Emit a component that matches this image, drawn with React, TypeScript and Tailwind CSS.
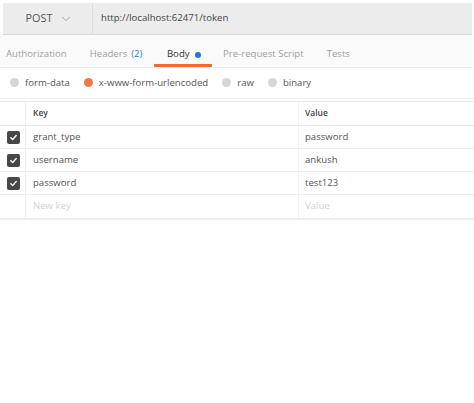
import React from 'react';

// Row data for the urlencoded body
const rows = [
  { key: 'grant_type', value: 'password' },
  { key: 'username', value: 'ankush' },
  { key: 'password', value: 'test123' },
];

const tabs = ['Authorization', 'Headers', 'Body', 'Pre-request Script', 'Tests'];

function Check() {
  return (
    <div className="w-[13px] h-[13px] rounded-[2px] bg-[#474747] flex items-center justify-center">
      <svg width="9" height="9" viewBox="0 0 10 10" fill="none">
        <path d="M2 5.2 L4.1 7.2 L8 2.8" stroke="#fff" strokeWidth="1.6" strokeLinecap="round" strokeLinejoin="round" />
      </svg>
    </div>
  );
}

function Radio({ active, label }: { active?: boolean; label: string }) {
  return (
    <div className="flex items-center gap-[6px]">
      <div className={`w-[9px] h-[9px] rounded-full ${active ? 'bg-[#f07a45]' : 'bg-[#d6d6d6]'}`} />
      <span>{label}</span>
    </div>
  );
}

export default function App() {
  return (
    <div
      className="w-[474px] h-[403px] bg-white text-[9.6px] text-[#555]"
      style={{ fontFamily: '"Open Sans", sans-serif' }}
    >
      {/* Request bar */}
      <div className="pt-[3px] pl-[3px] pr-[2px]">
        <div className="flex h-[32px] bg-[#ececec] border-b border-[#d9d9d9]">
          <div className="w-[90px] flex items-center justify-center gap-[9px] pl-[2px] border-r border-[#dcdcdc] text-[10.8px] text-[#555]">
            <span>POST</span>
            <svg width="10" height="6" viewBox="0 0 11 7" fill="none">
              <path d="M1 1 L5.5 5.5 L10 1" stroke="#999" strokeWidth="1" />
            </svg>
          </div>
          <div className="flex items-center pl-[8px] text-[9.6px] text-[#444]">http://localhost:62471/token</div>
        </div>
      </div>

      {/* Tabs */}
      <div className="mr-[2px] flex h-[33px] bg-[#fafafa] border-b border-[#ececec] text-[#a0a0a0]">
        {tabs.map((t, i) => (
          <div
            key={t}
            className={`flex items-center pt-[10px] border-b-[3px] ${
              t === 'Body' ? 'border-[#f06a35] text-[#333] pl-[13px] pr-[11px]' : 'border-transparent px-[11.5px]'
            } ${i === 0 ? 'pl-[6px]' : ''}`}
          >
            {t}
            {t === 'Headers' && <span className="ml-[4px] text-[#2f80d8]">(2)</span>}
            {t === 'Body' && <span className="ml-[5px] w-[6px] h-[6px] rounded-full bg-[#1e76d8]" />}
          </div>
        ))}
      </div>

      {/* Body types */}
      <div className="flex items-center h-[31px] pl-[10px] gap-[14px] text-[#555] border-b border-[#f0f0f0]">
        <Radio label="form-data" />
        <Radio active label="x-www-form-urlencoded" />
        <Radio label="raw" />
        <Radio label="binary" />
      </div>

      {/* Key / value table */}
      <div className="mt-[2px] border-t border-[#e8e8e8] border-b-2 border-b-[#ececec]">
        <div className="flex h-[24px] border-b border-[#e8e8e8] text-[8.5px] font-semibold text-[#444]">
          <div className="w-[26px] border-r border-[#ececec]" />
          <div className="w-[273px] pl-[7px] flex items-center border-r border-[#f2f2f2]">Key</div>
          <div className="flex-1 pl-[6px] flex items-center">Value</div>
        </div>
        {rows.map(r => (
          <div key={r.key} className="flex h-[23px] border-b border-[#efefef]">
            <div className="w-[26px] flex items-center justify-center pl-[2px] border-r border-[#ececec]">
              <Check />
            </div>
            <div className="w-[273px] pl-[7px] flex items-center border-r border-[#f2f2f2]">{r.key}</div>
            <div className="flex-1 pl-[6px] flex items-center">{r.value}</div>
          </div>
        ))}
        <div className="flex h-[23px] text-[#d2d2d2]">
          <div className="w-[26px] border-r border-[#ececec]" />
          <div className="w-[273px] pl-[7px] flex items-center border-r border-[#f2f2f2]">New key</div>
          <div className="flex-1 pl-[6px] flex items-center">Value</div>
        </div>
      </div>
    </div>
  );
}
